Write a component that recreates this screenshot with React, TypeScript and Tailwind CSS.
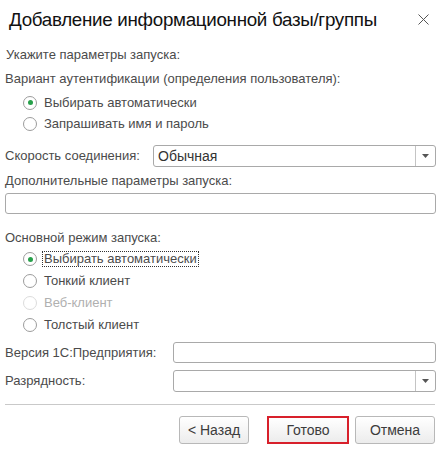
import React from "react";

function Radio({ checked, disabled, label, focus }: { checked?: boolean; disabled?: boolean; label: string; focus?: boolean }) {
  return (
    <div className="flex items-center h-full pl-[18px]">
      <span
        className={
          "w-[14px] h-[14px] rounded-full border bg-white flex items-center justify-center " +
          (disabled ? "border-[#dcdcdc]" : "border-[#9c9c9c]")
        }
      >
        {checked && <span className="w-[5px] h-[5px] rounded-full bg-[#27a04a]" />}
      </span>
      <span
        className={
          "ml-[5px] px-px leading-[14px] border border-dotted " +
          (focus ? "border-[#333]" : "border-transparent") +
          (disabled ? " text-[#b0b0b0]" : "")
        }
      >
        {label}
      </span>
    </div>
  );
}

function Select({ value }: { value?: string }) {
  return (
    <div className="flex-1 h-full border border-[#a9a9a9] rounded-[3px] bg-white flex">
      <div className="flex-1 flex items-center pl-[4px] text-[#333] text-[14px]">{value}</div>
      <div className="w-[20px] border-l border-[#c4c4c4] flex items-center justify-center">
        <svg width="7" height="4" viewBox="0 0 7 4">
          <path d="M0 0 H7 L3.5 4 Z" fill="#555" />
        </svg>
      </div>
    </div>
  );
}

function Btn({ children, red, w }: { children: React.ReactNode; red?: boolean; w: string }) {
  return (
    <div
      className={
        "h-full flex items-center justify-center text-[14px] text-[#3c3c3c] bg-gradient-to-b from-[#ffffff] to-[#ececec] " +
        w +
        (red ? " border-2 border-[#d8202b]" : " border border-[#b8b8b8] rounded-[3px]")
      }
    >
      {children}
    </div>
  );
}

export default function App() {
  return (
    <div className="w-[441px] h-[452px] bg-white font-['Liberation_Sans',Arial,sans-serif] text-[13px] text-[#4b4b4b] flex flex-col overflow-hidden">
      <div className="h-[40px] flex items-center justify-between pl-[9px] pr-[12px] shrink-0">
        <span className="text-[18.8px] tracking-[-0.3px] text-[#111] leading-none pt-[1px] whitespace-nowrap">Добавление информационной базы/группы</span>
        <svg width="11" height="11" viewBox="0 0 11 11" className="mt-[-1px] shrink-0">
          <path d="M0.5 0.5 L10.5 10.5 M10.5 0.5 L0.5 10.5" stroke="#555" strokeWidth="1" />
        </svg>
      </div>
      <div className="flex flex-col px-[5px]">
        <div className="mt-[7px] h-[16px] leading-[16px] pl-[1px]">Укажите параметры запуска:</div>
        <div className="mt-[8px] h-[16px] leading-[16px]">Вариант аутентификации (определения пользователя):</div>
        <div className="mt-[5px] h-[21px]">
          <Radio checked label="Выбирать автоматически" />
        </div>
        <div className="h-[21px]">
          <Radio label="Запрашивать имя и пароль" />
        </div>
        <div className="mt-[11px] h-[22px] flex items-center">
          <div className="w-[148px]">Скорость соединения:</div>
          <Select value="Обычная" />
        </div>
        <div className="mt-[6px] h-[16px] leading-[16px]">Дополнительные параметры запуска:</div>
        <div className="mt-[4px] h-[21px] border border-[#a9a9a9] rounded-[3px] bg-white" />
        <div className="mt-[16px] h-[16px] leading-[16px]">Основной режим запуска:</div>
        <div className="mt-[2px] h-[22px]">
          <Radio checked focus label="Выбирать автоматически" />
        </div>
        <div className="h-[22px]">
          <Radio label="Тонкий клиент" />
        </div>
        <div className="h-[22px]">
          <Radio disabled label="Веб-клиент" />
        </div>
        <div className="h-[22px]">
          <Radio label="Толстый клиент" />
        </div>
        <div className="mt-[6px] h-[21px] flex items-center">
          <div className="w-[168px]">Версия 1С:Предприятия:</div>
          <div className="flex-1 h-full border border-[#a9a9a9] rounded-[3px] bg-white" />
        </div>
        <div className="mt-[7px] h-[22px] flex items-center">
          <div className="w-[168px]">Разрядность:</div>
          <Select />
        </div>
        <div className="mt-[12px] h-px bg-[#c9c9c9] mr-[1px]" />
        <div className="mt-[11px] h-[28px] flex justify-end pr-[1px]">
          <Btn w="w-[70px]">&lt; Назад</Btn>
          <div className="ml-[18px] h-full">
            <Btn red w="w-[82px]">Готово</Btn>
          </div>
          <div className="ml-[6px] h-full">
            <Btn w="w-[80px]">Отмена</Btn>
          </div>
        </div>
      </div>
    </div>
  );
}
